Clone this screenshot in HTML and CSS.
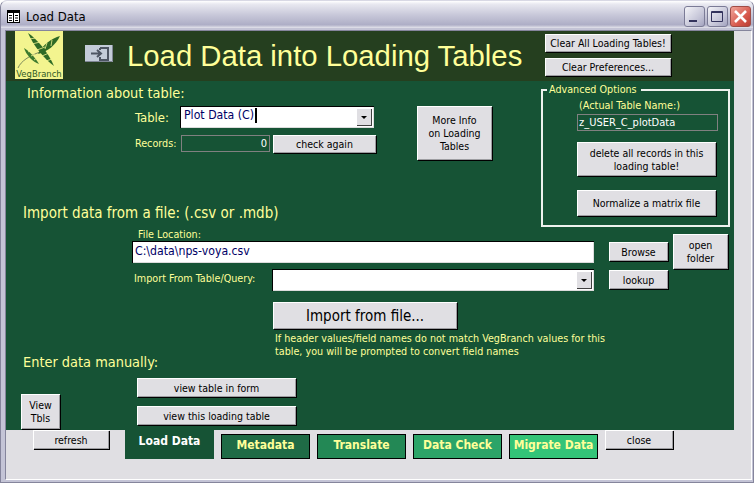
FILE: index.html
```html
<!DOCTYPE html>
<html lang="en">
<head>
    <meta charset="UTF-8">
    <title>Load Data</title>
    <link rel="stylesheet" href="styles.css">
</head>
<body>
<div class="window">
    <div class="titlebar">
        <svg class="form-icon" width="13" height="13" viewBox="0 0 13 13">
            <rect x="0.5" y="0.5" width="12" height="12" fill="#fff" stroke="#000"/>
            <rect x="0" y="0" width="13" height="3" fill="#000"/>
            <path d="M6.5 3V13M2 5.5H5M2 8H5M2 10.5H5M8 5.5H11M8 8H11M8 10.5H11" stroke="#000" fill="none"/>
        </svg>
        <span class="title-text">Load Data</span>
        <div class="title-buttons">
            <span class="title-btn"><svg width="21" height="21" viewBox="0 0 21 21"><rect x="5" y="14" width="8" height="2" fill="#33335c"/></svg></span>
            <span class="title-btn"><svg width="21" height="21" viewBox="0 0 21 21"><path d="M4.5 5.5H15.5V15.5H4.5Z M4.5 6.5H15.5" fill="none" stroke="#33335c"/></svg></span>
            <span class="title-btn close-btn"><svg width="21" height="21" viewBox="0 0 21 21"><path d="M5 5L16 16M16 5L5 16" stroke="#fff" stroke-width="2.6"/></svg></span>
        </div>
    </div>
    <div class="client">
        <div class="content">
            <div class="form">
                <div class="header">
                    <div class="logo">
                        <svg class="logo-leaves" width="48" height="37" viewBox="0 0 48 37">
                            <path d="M3 37C6 30 14 25 25 21" fill="none" stroke="#7d8a5c"/>
                            <path d="M13 2C22 8 33 21 39 35C30 29 18 14 13 2Z" fill="#2f6b25"/>
                            <path d="M45 5C37 7 27 14 23 23C32 21 41 14 45 5Z" fill="#2f6b25"/>
                            <path d="M9 17C14 20 20 26 24 33C18 31 11 24 9 17Z" fill="#3d7a2e"/>
                            <path d="M14 8L21 7M17 13L25 11M22 19L30 16M27 25L34 22M31 30L37 28M30 18L32 12M36 15L37 9M13 21L16 19M16 25L20 23M19 29L22 27" stroke="#f3f48f" stroke-width="0.8" fill="none"/>
                        </svg>
                        <span class="logo-text">VegBranch</span>
                    </div>
                    <svg class="exit-icon" width="28" height="17" viewBox="0 0 28 17">
                        <rect width="28" height="17" fill="#c3ccd9"/>
                        <path d="M27.5 0V16.5H0" fill="none" stroke="#7f8794"/>
                        <path d="M6 8.5H15M12 5L16 8.5L12 12" fill="none" stroke="#4d5563" stroke-width="2"/>
                        <path d="M15 3H23V15H15V12M15 5V3" fill="none" stroke="#4d5563" stroke-width="2"/>
                    </svg>
                    <h1>Load Data into Loading Tables</h1>
                    <div class="header-buttons">
                        <button class="btn">Clear All Loading Tables!</button>
                        <button class="btn">Clear Preferences...</button>
                    </div>
                </div>
                <div class="form-body">
                    <div class="upper">
                        <div class="info">
                            <h2 class="info-head">Information about table:</h2>
                            <div class="info-main">
                                <div class="fields">
                                    <div class="table-row">
                                        <label class="table-label">Table:</label>
                                        <div class="combo table-combo">
                                            <span class="combo-value">Plot Data (C)<i class="caret"></i></span>
                                            <span class="combo-arrow"></span>
                                        </div>
                                    </div>
                                    <div class="records-row">
                                        <label class="records-label">Records:</label>
                                        <div class="readout records-value">0</div>
                                        <button class="btn check-btn">check again</button>
                                    </div>
                                </div>
                                <button class="btn more-btn">More Info<br>on Loading<br>Tables</button>
                            </div>
                            <h2 class="import-head">Import data from a file: (.csv or .mdb)</h2>
                        </div>
                        <fieldset class="advanced">
                            <legend>Advanced Options</legend>
                            <div class="actual-label">(Actual Table Name:)</div>
                            <div class="readout actual-value">z_USER_C_plotData</div>
                            <button class="btn delete-btn">delete all records in this<br>loading table!</button>
                            <button class="btn normalize-btn">Normalize a matrix file</button>
                        </fieldset>
                    </div>
                    <div class="import">
                        <div class="import-fields">
                            <label class="location-label">File Location:</label>
                            <div class="location-row">
                                <div class="text-input">C:\data\nps-voya.csv</div>
                                <button class="btn side-btn">Browse</button>
                            </div>
                            <div class="query-row">
                                <label class="query-label">Import From Table/Query:</label>
                                <div class="combo query-combo">
                                    <span class="combo-value"></span>
                                    <span class="combo-arrow"></span>
                                </div>
                                <button class="btn side-btn">lookup</button>
                            </div>
                        </div>
                        <button class="btn folder-btn">open<br>folder</button>
                    </div>
                    <div class="import-action">
                        <h2 class="manual-head">Enter data manually:</h2>
                        <div class="action-col">
                            <button class="btn import-btn">Import from file...</button>
                            <p class="note">If header values/field names do not match VegBranch values for this table, you will be prompted to convert field names</p>
                        </div>
                    </div>
                    <div class="manual">
                        <button class="btn tbls-btn">View<br>Tbls</button>
                        <div class="view-buttons">
                            <button class="btn view-btn">view table in form</button>
                            <button class="btn view-btn">view this loading table</button>
                        </div>
                    </div>
                </div>
            </div>
            <div class="tabstrip">
                <button class="btn refresh-btn">refresh</button>
                <div class="tab tab-active">Load Data</div>
                <div class="tab tab-meta">Metadata</div>
                <div class="tab tab-translate">Translate</div>
                <div class="tab tab-check">Data Check</div>
                <div class="tab tab-migrate">Migrate Data</div>
                <button class="btn close-form-btn">close</button>
            </div>
        </div>
    </div>
</div>
</body>
</html>
```

FILE: styles.css
```css
* {
    box-sizing: border-box;
}

html, body {
    margin: 0;
    padding: 0;
    background-color: #ffffff;
}

body {
    font-family: "DejaVu Sans", "Liberation Sans", sans-serif;
    font-stretch: condensed;
    font-size: 10.7px;
    color: #000000;
}

.window {
    width: 754px;
    height: 483px;
    display: flex;
    flex-direction: column;
    background-color: #c4c4d6;
    border: 1px solid #85859c;
    border-top-color: #d8d8e4;
    border-radius: 7px 7px 0 0;
    overflow: hidden;
}

/* title bar */
.titlebar {
    height: 27px;
    flex: none;
    display: flex;
    align-items: center;
    padding: 3px 2px 0 6px;
    background: linear-gradient(#ffffff 0, #e8e8f0 12%, #c9c9da 50%, #aeaec6 88%, #e4e4ec 100%);
}

.form-icon {
    margin-right: 6px;
}

.title-text {
    font-size: 13px;
    color: #000000;
}

.title-buttons {
    margin-left: auto;
    display: flex;
    gap: 2px;
}

.title-btn {
    width: 21px;
    height: 21px;
    display: block;
    border: 1px solid #7b7b96;
    border-radius: 3px;
    background: linear-gradient(135deg, #f4f4f8, #c0c0d4 70%, #a3a3bf);
}

.title-btn svg {
    display: block;
    margin: -1px;
}

.close-btn {
    border-color: #a04c46;
    background: linear-gradient(135deg, #f0a59a, #d6564a 65%, #b83e34);
}

.client {
    flex: 1;
    padding: 2px 1px 2px 4px;
    display: flex;
}

.content {
    flex: 1;
    display: flex;
    flex-direction: column;
    background-color: #e0dfe3;
    border-left: 1px solid #85859c;
    border-top: 1px solid #85859c;
    border-right: 1px solid #ffffff;
    border-bottom: 1px solid #ffffff;
}

.form {
    width: 728px;
    height: 399px;
    flex: none;
    background-color: #165335;
}

/* header band */
.header {
    height: 50px;
    display: flex;
    background-color: #253f1f;
}

.logo {
    width: 48px;
    height: 48px;
    margin-left: 9px;
    display: flex;
    flex-direction: column;
    align-items: center;
    background-color: #f3f48f;
}

.logo-leaves {
    display: block;
    flex: none;
}

.logo-text {
    font-family: "DejaVu Sans", sans-serif;
    font-size: 9.4px;
    line-height: 11px;
    color: #2f5a26;
}

.exit-icon {
    margin: 14px 0 0 22px;
    flex: none;
}

h1 {
    margin: 0 0 0 14px;
    width: 418px;
    flex: none;
    font-family: "Liberation Sans", sans-serif;
    font-stretch: normal;
    font-weight: normal;
    font-size: 29.3px;
    line-height: 50px;
    color: #ffff99;
    white-space: nowrap;
}

.header-buttons {
    display: flex;
    flex-direction: column;
    gap: 6px;
    padding-top: 3px;
}

/* buttons look like raised Access command buttons */
.btn {
    display: block;
    padding: 1px 0 0;
    font-family: inherit;
    font-stretch: inherit;
    font-size: 10.5px;
    line-height: 13px;
    color: #000000;
    text-align: center;
    background-color: #e0dfe3;
    border: none;
    border-radius: 0;
    box-shadow: inset 1px 1px 0 #ffffff, inset -1px -1px 0 #9d9da1, 1px 1px 0 #000000;
}

.header-buttons .btn {
    width: 126px;
    height: 18px;
}

/* main part of the form */
h2 {
    margin: 0;
    font-size: 14.4px;
    font-weight: normal;
    line-height: 18px;
    color: #ffff99;
}

label {
    color: #ffff99;
}

.upper {
    height: 146px;
    display: flex;
}

.info {
    width: 535px;
    flex: none;
}

.info-head {
    margin: 3px 0 0 21px;
}

.info-main {
    display: flex;
}

.fields {
    width: 411px;
    padding-top: 4px;
}

.table-row {
    display: flex;
    align-items: center;
    height: 22px;
}

.table-label {
    width: 129px;
    margin-right: 45px;
    padding-left: 129px;
    font-size: 13px;
    white-space: nowrap;
}

.combo {
    display: flex;
    height: 22px;
    padding: 1px 2px 2px 1px;
    background-color: #ffffff;
    border-top: 1px solid #000000;
    border-left: 1px solid #000000;
    box-shadow: inset -1px -1px 0 #dcdcdc;
}

.table-combo {
    width: 194px;
}

.combo-value {
    flex: 1;
    padding-left: 2px;
    font-size: 12.2px;
    line-height: 15px;
    color: #000066;
}

.caret {
    display: inline-block;
    width: 1px;
    height: 15px;
    margin-left: 1px;
    vertical-align: top;
    background-color: #000000;
    box-shadow: 1px 0 0 #000000;
}

.combo-arrow {
    position: relative;
    width: 16px;
    background-color: #e0dfe3;
    box-shadow: inset 1px 1px 0 #ffffff, inset -1px -1px 0 #404040;
}

.combo-arrow::after {
    content: "";
    position: absolute;
    left: 5px;
    top: 8px;
    border-top: 3px solid #000000;
    border-left: 3px solid transparent;
    border-right: 3px solid transparent;
}

.records-row {
    display: flex;
    align-items: center;
    height: 19px;
    margin-top: 6px;
}

.records-label {
    width: 175px;
    padding-left: 129px;
    white-space: nowrap;
}

.readout {
    border: 1px solid #808080;
    color: #ffffff;
    font-size: 11px;
    line-height: 15px;
    white-space: nowrap;
}

.records-value {
    width: 89px;
    height: 17px;
    padding-right: 2px;
    text-align: right;
}

.check-btn {
    width: 103px;
    height: 18px;
    margin-left: 3px;
}

.more-btn {
    width: 75px;
    height: 54px;
    margin-top: 4px;
}

.import-head {
    margin: 44px 0 0 17px;
    font-size: 15px;
}

/* advanced options box */
.advanced {
    width: 189px;
    height: 144px;
    margin: 2px 0 0 0;
    padding: 0;
    border: 2px solid #eef2ee;
}

.advanced legend {
    margin-left: 4px;
    padding: 0 4px 0 2px;
    line-height: 14px;
    color: #ffff99;
}

.actual-label {
    margin: 2px 0 0 36px;
    font-size: 10.8px;
    line-height: 14px;
    color: #ffff99;
    white-space: nowrap;
}

.actual-value {
    width: 141px;
    height: 17px;
    margin: 1px 0 0 34px;
    padding-left: 1px;
}

.delete-btn {
    width: 139px;
    height: 34px;
    margin: 11px 0 0 34px;
}

.normalize-btn {
    width: 139px;
    height: 26px;
    margin: 14px 0 0 34px;
}

/* file import */
.import {
    height: 75px;
    display: flex;
}

.import-fields {
    width: 667px;
    flex: none;
}

.location-label {
    display: block;
    margin: 0 0 -2px 132px;
    line-height: 16px;
}

.location-row {
    display: flex;
    align-items: flex-start;
    margin-left: 126px;
}

.text-input {
    width: 462px;
    height: 22px;
    padding-left: 2px;
    font-size: 12.2px;
    line-height: 19px;
    color: #000066;
    background-color: #ffffff;
    border-top: 1px solid #000000;
    border-left: 1px solid #000000;
    box-shadow: inset -1px -1px 0 #dcdcdc;
}

.side-btn {
    width: 59px;
    height: 19px;
    margin: 1px 0 0 15px;
}

.query-row {
    display: flex;
    align-items: flex-start;
    margin: 6px 0 0 128px;
}

.query-label {
    width: 138px;
    line-height: 20px;
    white-space: nowrap;
}

.query-combo {
    width: 322px;
}

.folder-btn {
    width: 55px;
    height: 35px;
    margin-top: 7px;
}

.import-action {
    height: 70px;
    display: flex;
}

.manual-head {
    width: 267px;
    flex: none;
    align-self: flex-end;
    padding: 0 0 1px 17px;
    white-space: nowrap;
}

.import-btn {
    width: 184px;
    height: 27px;
    font-size: 15px;
}

.note {
    width: 340px;
    margin: 3px 0 0 2px;
    font-size: 10.7px;
    line-height: 13px;
    color: #ffff99;
}

.manual {
    height: 58px;
    display: flex;
    align-items: flex-end;
}

.tbls-btn {
    width: 39px;
    height: 35px;
    margin: 0 0 1px 15px;
}

.view-buttons {
    display: flex;
    flex-direction: column;
    gap: 9px;
    margin: 0 0 5px 77px;
}

.view-btn {
    width: 159px;
    height: 19px;
}

/* bottom tabs */
.tabstrip {
    display: flex;
    align-items: flex-start;
    padding-left: 27px;
}

.refresh-btn {
    width: 76px;
    height: 19px;
}

.tab {
    width: 89px;
    height: 25px;
    margin: 4px 0 0 7px;
    font-size: 12px;
    font-weight: bold;
    line-height: 20px;
    text-align: center;
    color: #ffff99;
    border: 1px solid #000000;
}

.tab-active {
    height: 29px;
    margin: 0 0 0 16px;
    line-height: 22px;
    color: #ffffff;
    background-color: #165335;
    border: none;
}

.tab-meta {
    background-color: #1f6b46;
}

.tab-translate {
    background-color: #238855;
}

.tab-check {
    background-color: #2ca468;
}

.tab-migrate {
    background-color: #33c478;
}

.close-form-btn {
    width: 68px;
    height: 19px;
    margin-left: 7px;
}
```
